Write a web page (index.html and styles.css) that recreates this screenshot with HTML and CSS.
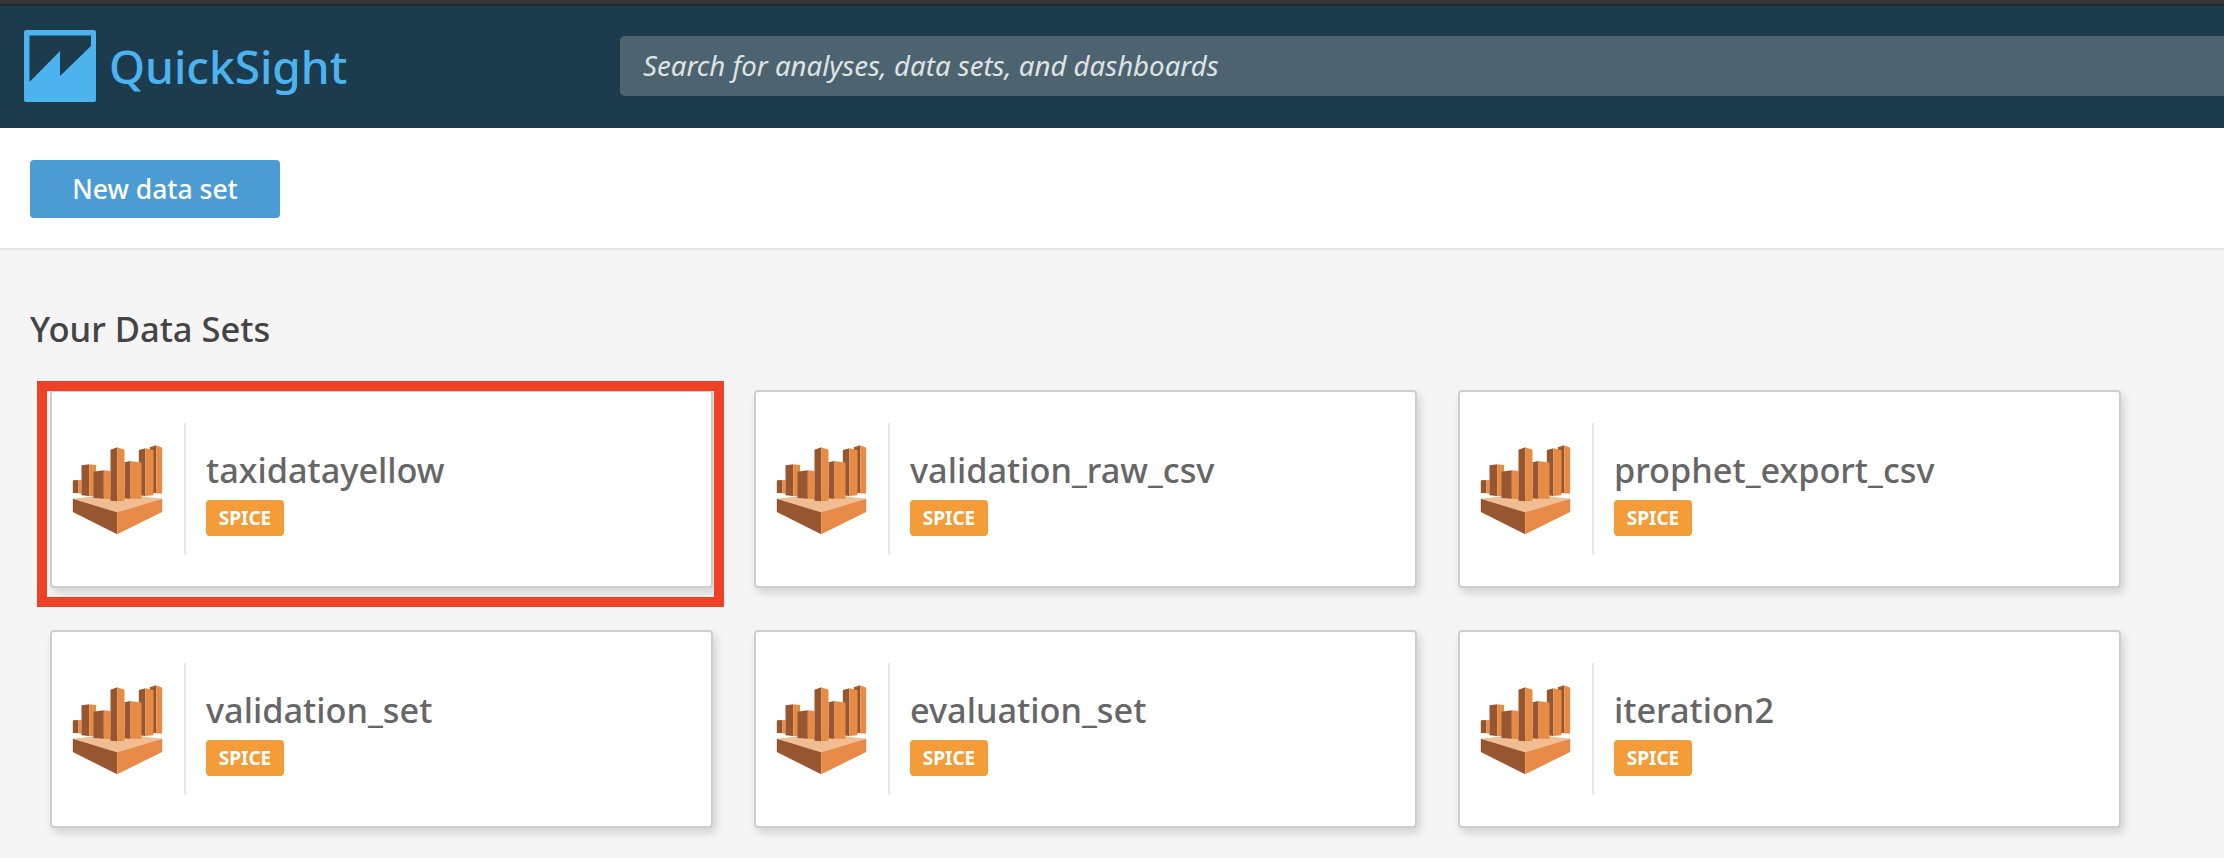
FILE: index.html
```html
<!DOCTYPE html>
<html lang="en">
<head>
<meta charset="utf-8">
<title>QuickSight data sets</title>
<link rel="stylesheet" href="styles.css">
</head>
<body>
<svg class="defs" width="0" height="0" aria-hidden="true">
  <symbol id="spice-icon" viewBox="38 44 272 270">
    <polygon class="pale" points="40,205 173,190 308,205 173,246"/>
    <polygon class="dark" points="40,205 173,246 173,312 40,245"/>
    <polygon class="light" points="173,246 308,205 308,245 173,312"/>
    <polygon class="dark" points="40,150 57,149 57,189 40,188"/>
    <polygon class="light" points="57,149 66,150 66,190 57,189"/>
    <polygon class="dark" points="66,105 89,102 89,197 66,195"/>
    <polygon class="light" points="89,102 110,104 110,198 89,197"/>
    <polygon class="dark" points="102,124 133,120 133,205 102,203"/>
    <polygon class="light" points="133,120 153,122 153,207 133,205"/>
    <polygon class="dark" points="271,51 290,45 290,189 271,187"/>
    <polygon class="light" points="290,45 308,52 308,190 290,189"/>
    <polygon class="dark" points="238,59 258,54 258,197 238,195"/>
    <polygon class="light" points="258,54 282,59 282,195 258,197"/>
    <polygon class="dark" points="195,96 213,92 213,205 195,204"/>
    <polygon class="light" points="213,92 246,97 246,205 213,205"/>
    <polygon class="dark" points="153,58 173,51 173,213 153,211"/>
    <polygon class="light" points="173,51 195,58 195,211 173,213"/>
  </symbol>
</svg>
<div class="os-bar"></div>
<header class="header">
  <a class="brand" href="#">
    <svg class="brand-mark" viewBox="0 0 72 72" aria-hidden="true">
      <rect width="72" height="72" rx="2" class="mark-bg"/>
      <polygon class="mark-cut" points="5.500,5.500 67,5.500 67,16 36,46 36,21 5.500,52"/>
    </svg>
    <span class="brand-name">QuickSight</span>
  </a>
  <div class="search">Search for analyses, data sets, and dashboards</div>
</header>
<div class="toolbar">
  <button class="primary-btn" type="button">New data set</button>
</div>
<main class="main">
  <h1 class="title">Your Data Sets</h1>
  <div class="grid">
    <article class="card card-marked">
      <div class="card-icon"><svg class="spice-icon"><use href="#spice-icon"/></svg></div>
      <div class="card-body"><div class="card-name">taxidatayellow</div><span class="badge">SPICE</span></div>
      <span class="marker"></span>
    </article>
    <article class="card">
      <div class="card-icon"><svg class="spice-icon"><use href="#spice-icon"/></svg></div>
      <div class="card-body"><div class="card-name">validation_raw_csv</div><span class="badge">SPICE</span></div>
    </article>
    <article class="card">
      <div class="card-icon"><svg class="spice-icon"><use href="#spice-icon"/></svg></div>
      <div class="card-body"><div class="card-name">prophet_export_csv</div><span class="badge">SPICE</span></div>
    </article>
    <article class="card">
      <div class="card-icon"><svg class="spice-icon"><use href="#spice-icon"/></svg></div>
      <div class="card-body"><div class="card-name">validation_set</div><span class="badge">SPICE</span></div>
    </article>
    <article class="card">
      <div class="card-icon"><svg class="spice-icon"><use href="#spice-icon"/></svg></div>
      <div class="card-body"><div class="card-name">evaluation_set</div><span class="badge">SPICE</span></div>
    </article>
    <article class="card">
      <div class="card-icon"><svg class="spice-icon"><use href="#spice-icon"/></svg></div>
      <div class="card-body"><div class="card-name">iteration2</div><span class="badge">SPICE</span></div>
    </article>
  </div>
</main>
</body>
</html>
```
FILE: styles.css
```css
* { box-sizing: border-box; }
html, body { margin: 0; height: 100%; }
body {
  height: 858px;
  overflow: hidden;
  display: flex;
  flex-direction: column;
  background: #f5f5f5;
  font-family: "Noto Sans", "Open Sans", sans-serif;
}
.defs { position: absolute; }
.dark { fill: #975630; }
.light { fill: #e78c46; }
.pale { fill: #f2bd93; }

.os-bar {
  height: 6px;
  flex: none;
  background: #353535;
  border-bottom: 2px solid #212b31;
}
.header {
  flex: none;
  height: 122px;
  display: flex;
  align-items: center;
  padding-left: 24px;
  background: #1c3b4d;
}
.brand {
  display: flex;
  align-items: center;
  gap: 13px;
  width: 596px;
  height: 72px;
  margin-bottom: 2px;
  text-decoration: none;
}
.brand-mark { width: 72px; height: 72px; flex: none; }
.mark-bg { fill: #4db3ef; }
.mark-cut { fill: #1c3b4d; }
.brand-name { font-size: 46px; line-height: 72px; font-weight: 500; color: #4db3ef; }
.search {
  flex: 1;
  height: 60px;
  margin-bottom: 2px;
  padding-left: 23px;
  line-height: 58px;
  font-size: 27.6px;
  font-style: italic;
  color: #dfe3e5;
  background: #4d6470;
  border-radius: 5px 0 0 5px;
}
.toolbar {
  flex: none;
  height: 120px;
  padding: 32px 0 0 30px;
  background: #fff;
  box-shadow: 0 1px 3px rgba(0, 0, 0, 0.12);
  position: relative;
}
.primary-btn {
  display: block;
  width: 250px;
  height: 58px;
  padding: 0;
  border: 0;
  border-radius: 4px;
  background: #4b9cd3;
  color: #fff;
  font-family: inherit;
  font-size: 26.5px;
  font-weight: 500;
}
.main { flex: 1; padding: 57px 0 0 30px; }
.title {
  margin: 0;
  height: 48px;
  font-size: 34.5px;
  line-height: 48px;
  font-weight: 500;
  color: #444;
}
.grid {
  display: grid;
  grid-template-columns: repeat(3, 663px);
  grid-auto-rows: 198px;
  column-gap: 41px;
  row-gap: 42px;
  margin: 37px 0 0 20px;
}
.card {
  position: relative;
  display: flex;
  align-items: center;
  background: #fff;
  border: 2px solid #cfcfcf;
  border-radius: 4px;
  box-shadow: 3px 5px 8px rgba(0, 0, 0, 0.14);
}
.card-icon {
  width: 134px;
  height: 132px;
  flex: none;
  display: flex;
  align-items: center;
  padding-left: 20px;
  border-right: 2px solid #e9e9e9;
}
.spice-icon { width: 91px; height: 90px; margin-top: 2px; }
.card-body { padding: 2px 0 0 20px; }
.card-name {
  font-size: 34.3px;
  font-weight: 500;
  line-height: 44px;
  margin-top: 4px;
  color: #666;
}
.badge {
  display: block;
  width: 78px;
  height: 36px;
  margin-top: 8px;
  border-radius: 4px;
  background: #f49c37;
  color: #fff;
  font-size: 19px;
  font-weight: 700;
  line-height: 37px;
  text-align: center;
}
.marker {
  position: absolute;
  left: -15px;
  right: -13px;
  top: -11px;
  bottom: -21px;
  border: 10px solid #ee4126;
  pointer-events: none;
}
```
